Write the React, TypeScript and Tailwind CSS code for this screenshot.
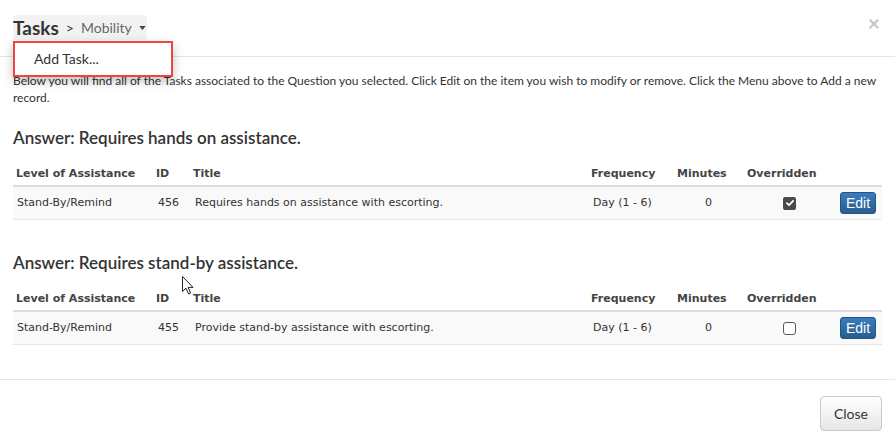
import React from "react";

type Row = {
  level: string;
  id: string;
  title: string;
  frequency: string;
  minutes: string;
  overridden: boolean;
};

const sections: { answer: string; rows: Row[] }[] = [
  {
    answer: "Answer: Requires hands on assistance.",
    rows: [
      {
        level: "Stand-By/Remind",
        id: "456",
        title: "Requires hands on assistance with escorting.",
        frequency: "Day (1 - 6)",
        minutes: "0",
        overridden: true,
      },
    ],
  },
  {
    answer: "Answer: Requires stand-by assistance.",
    rows: [
      {
        level: "Stand-By/Remind",
        id: "455",
        title: "Provide stand-by assistance with escorting.",
        frequency: "Day (1 - 6)",
        minutes: "0",
        overridden: false,
      },
    ],
  },
];

const cols = "grid grid-cols-[140px_37px_398px_86px_70px_86px_52px]";

function Checkbox({ checked }: { checked: boolean }) {
  if (checked) {
    return (
      <div className="flex h-[13px] w-[13px] items-center justify-center rounded-[2px] bg-[#4a4a4a]">
        <svg viewBox="0 0 12 12" className="h-[10px] w-[10px]">
          <path d="M2.2 6.2 L4.8 8.6 L9.8 3.4" stroke="white" strokeWidth="2.2" fill="none" strokeLinecap="round" strokeLinejoin="round" />
        </svg>
      </div>
    );
  }
  return <div className="h-[13px] w-[13px] rounded-[3px] border border-[#5a5a5a] bg-white" />;
}

function TaskTable({ rows }: { rows: Row[] }) {
  return (
    <div className="font-['DejaVu_Sans',Verdana,sans-serif] text-[11px] text-[#333]">
      <div className={`${cols} h-[23px] items-center border-b-2 border-[#dddddd] font-bold text-[#444]`}>
        <div className="pl-[3px]">Level of Assistance</div>
        <div className="pl-[3px]">ID</div>
        <div className="pl-[3px]">Title</div>
        <div className="pl-[3px]">Frequency</div>
        <div className="pl-[3px]">Minutes</div>
        <div className="pl-[3px]">Overridden</div>
        <div />
      </div>
      {rows.map((r) => (
        <div key={r.id} className={`${cols} h-[33px] items-center border-b border-[#e6e6e6] bg-[#f9f9f9]`}>
          <div className="pl-[4px]">{r.level}</div>
          <div className="pl-[5px]">{r.id}</div>
          <div className="pl-[5px]">{r.title}</div>
          <div className="pl-[5px]">{r.frequency}</div>
          <div className="pl-[31px]">{r.minutes}</div>
          <div className="pl-[39px]">
            <Checkbox checked={r.overridden} />
          </div>
          <div className="pl-[10px]">
            <button className="h-[22px] w-[36px] rounded-[3px] border border-[#245580] bg-gradient-to-b from-[#3a7cbf] to-[#285e8e] font-['Liberation_Sans',Arial,sans-serif] text-[14px] leading-none text-white">
              Edit
            </button>
          </div>
        </div>
      ))}
    </div>
  );
}

export default function App() {
  return (
    <div className="relative h-[444px] w-[895px] overflow-hidden bg-white font-['Lato',sans-serif] text-[#333]">
      {/* header */}
      <div className="relative flex h-[57px] items-start border-b border-[#e5e5e5] px-[13px] pt-[15px]">
        <div className="flex h-[25px] items-center rounded-[3px] bg-[#f2f2f2] pr-[1px]">
          <span className="text-[19px] font-bold leading-none text-[#333]">Tasks</span>
          <span className="ml-[7px] text-[14px] leading-none text-[#333]">&gt;</span>
          <span className="ml-[7px] text-[14px] leading-none text-[#666]">Mobility</span>
          <svg viewBox="0 0 8 5" className="ml-[7px] h-[4px] w-[7px]">
            <path d="M0 0 L8 0 L4 5 Z" fill="#444" />
          </svg>
        </div>
        <div className="ml-auto -mt-[3px] pr-[2px] text-[21px] font-bold leading-none text-[#c4c4c4]">×</div>

        {/* dropdown menu */}
        <div className="absolute left-[13px] top-[41px] z-10 h-[36px] w-[160px] border-2 border-[#ef4444] bg-white shadow-[0_4px_10px_rgba(0,0,0,0.25)]">
          <div className="pl-[19px] pt-[9px] text-[14px] leading-none text-[#333]">Add Task...</div>
        </div>
      </div>

      {/* body */}
      <div className="h-[322px] px-[13px] pt-[15px]">
        <p className="w-[876px] text-[12px] leading-[17px] text-[#333]">
          Below you will find all of the Tasks associated to the Question you selected. Click Edit on the item you wish to modify or remove. Click the Menu above to Add a new record.
        </p>

        <h4 className="mt-[22px] h-[20px] text-[17px] font-semibold leading-[20px] text-[#333]">{sections[0].answer}</h4>
        <div className="mt-[16px]">
          <TaskTable rows={sections[0].rows} />
        </div>

        <h4 className="mt-[33px] h-[20px] text-[17px] font-semibold leading-[20px] text-[#333]">{sections[1].answer}</h4>
        <div className="mt-[16px]">
          <TaskTable rows={sections[1].rows} />
        </div>
      </div>

      {/* footer */}
      <div className="flex justify-end border-t border-[#e5e5e5] px-[13px] pt-[16px]">
        <button className="h-[35px] w-[62px] rounded-[4px] border border-[#c8c8c8] bg-gradient-to-b from-white to-[#e6e6e6] text-[14px] text-[#333]">
          Close
        </button>
      </div>

      {/* mouse pointer */}
      <svg viewBox="0 0 12 19" className="absolute left-[182px] top-[276px] h-[19px] w-[12px]">
        <path d="M0.5 0.5 L0.5 15.5 L4 12.2 L6.6 18 L8.6 17.1 L6.1 11.4 L11 11.4 Z" fill="white" stroke="#222" strokeWidth="1" strokeLinejoin="round" />
      </svg>
    </div>
  );
}
